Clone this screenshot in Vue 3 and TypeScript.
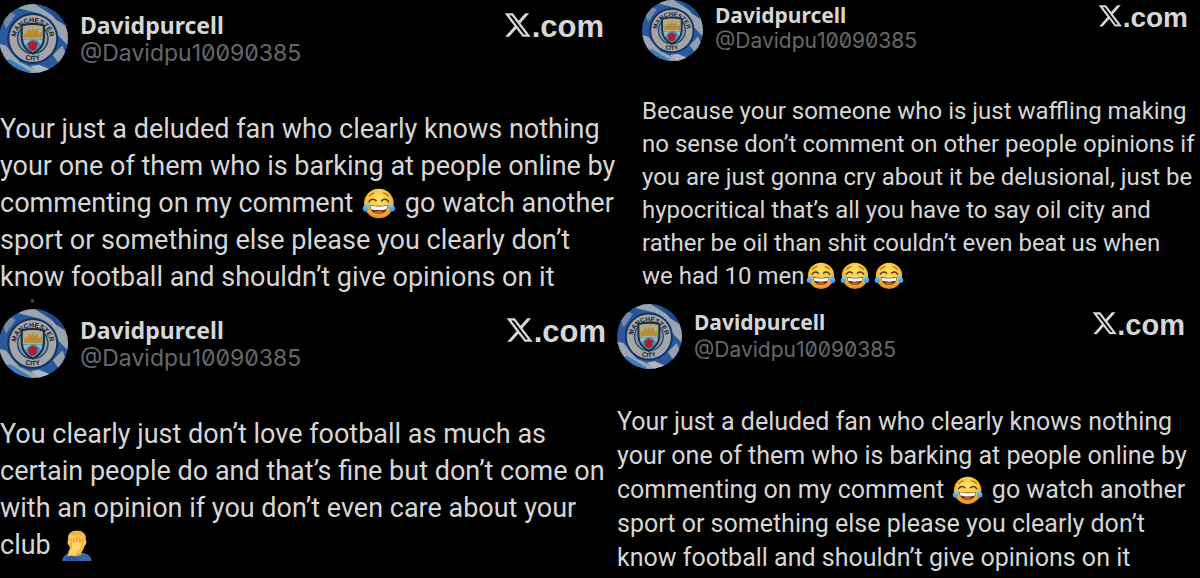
<script setup lang="ts">
interface Post {
  id: string
  lines: string[]
}

const name = 'Davidpurcell'
const handle = '@Davidpu10090385'

const deluded: string[] = [
  'Your just a deluded fan who clearly knows nothing',
  'your one of them who is barking at people online by',
  'commenting on my comment 😂 go watch another',
  'sport or something else please you clearly don’t',
  'know football and shouldn’t give opinions on it',
]

const columns: Post[][] = [
  [
    { id: 'first', lines: deluded },
    {
      id: 'third',
      lines: [
        'You clearly just don’t love football as much as',
        'certain people do and that’s fine but don’t come on',
        'with an opinion if you don’t even care about your',
        'club 🤦',
      ],
    },
  ],
  [
    {
      id: 'second',
      lines: [
        'Because your someone who is just waffling making',
        'no sense don’t comment on other people opinions if',
        'you are just gonna cry about it be delusional, just be',
        'hypocritical that’s all you have to say oil city and',
        'rather be oil than shit couldn’t even beat us when',
        'we had 10 men😂😂😂',
      ],
    },
    { id: 'fourth', lines: deluded },
  ],
]

const icons: Record<string, string> = { '😂': 'joy', '🤦': 'facepalm' }

function tokens(line: string): string[] {
  return line.split(/(😂|🤦)/u).filter((t) => t !== '')
}
</script>

<template>
  <svg class="defs" aria-hidden="true">
    <defs>
      <radialGradient id="face" cx="50%" cy="35%" r="65%">
        <stop offset="0" stop-color="#ffe36a" />
        <stop offset="0.6" stop-color="#fbc53c" />
        <stop offset="1" stop-color="#e58a1f" />
      </radialGradient>
      <linearGradient id="tear" x1="0" y1="0" x2="0" y2="1">
        <stop offset="0" stop-color="#8fd3f7" />
        <stop offset="1" stop-color="#2f93dd" />
      </linearGradient>
      <clipPath id="disc"><circle cx="50" cy="50" r="50" /></clipPath>
      <clipPath id="shield-clip"><path d="M33 31 Q49 27 65 31 V50 Q64 65 49 72 Q34 65 33 50Z" /></clipPath>
      <path id="arc-top" d="M24.500 51 A24.500 24.500 0 0 1 73.500 51" />
      <path id="arc-bottom" d="M17 50 A32 32 0 0 0 81 50" />
    </defs>
    <symbol id="joy" viewBox="0 0 36 32">
      <circle cx="18" cy="16" r="15.8" fill="url(#face)" />
      <path d="M8 8 Q10 5.500 13 5 M28 8 Q26 5.500 23 5" stroke="#a96a1c" stroke-width="1.4" fill="none" stroke-linecap="round" />
      <path d="M7.500 14 Q11 9.500 15 13 M21 13 Q25 9.500 28.500 14" stroke="#5b3514" stroke-width="1.7" fill="none" stroke-linecap="round" />
      <path d="M8 17.500 Q18 19.500 28 17.500 Q27 27 18 27 Q9 27 8 17.500Z" fill="#6b3412" />
      <path d="M8.800 18.200 Q18 20.200 27.200 18.200 L26.300 22 Q18 24 9.700 22Z" fill="#fff" />
      <path d="M13 25 Q18 22.800 23 25 Q18 28 13 25Z" fill="#d9603a" />
      <path d="M8 16 Q1 17 .8 21.500 Q1.200 25 4.300 24.500 Q7.600 23.500 8 16Z" fill="url(#tear)" />
      <path d="M28 16 Q35 17 35.200 21.500 Q34.800 25 31.700 24.500 Q28.400 23.500 28 16Z" fill="url(#tear)" />
    </symbol>
    <symbol id="facepalm" viewBox="0 0 34 34">
      <path d="M1 34 Q1 27 10 25 L24 25 Q33 27 33 34Z" fill="#3566a8" />
      <path d="M12 22 H22 V27 Q17 30 12 27Z" fill="#e8a52e" />
      <path d="M7.500 11 Q7 1 17 1 Q27 1 26.500 11 Q28 12 27.300 15 Q26.500 16.500 25.500 17 Q23.500 26 17 26 Q10 26 8.500 17 Q6.500 16 6.700 13Z" fill="#fbcb52" />
      <path d="M7 11 Q6 1 17 0.500 Q28 1 27 11 Q25 7 23 5 Q16 7 10 5.500 Q8 8 7 11Z" fill="#eeb244" />
      <path d="M7 28 Q8 22 11 18 L10.500 11 Q11 9 12.500 11 L14 14 L14 9 Q15 7 16 9 L17 13 L18 8 Q19.500 7 20 9 L20 14 L22 10 Q24 9 23.700 11 L22.500 18 Q21 23 17 26 L15 31 H7Z" fill="#ffd365" stroke="#cf8a2a" stroke-width="0.800" stroke-linejoin="round" />
      <path d="M5 30 Q11 26 18 30 V34 H5Z" fill="#2c5799" />
    </symbol>
    <symbol id="x-mark" viewBox="1 2 22 20">
      <path fill="currentColor" d="M18.244 2.250h3.308l-7.227 8.260 8.502 11.240H16.170l-5.214-6.817L4.990 21.750H1.680l7.730-8.835L1.254 2.250H8.080l4.713 6.231zm-1.161 17.520h1.833L7.084 4.126H5.117z" />
    </symbol>
  </svg>

  <main class="board">
    <div v-for="(column, c) in columns" :key="c" class="column">
      <article v-for="post in column" :key="post.id" class="post" :class="post.id">
        <header class="head">
          <svg class="avatar" viewBox="0 0 100 100" role="img" aria-label="Profile picture">
            <g clip-path="url(#disc)">
              <rect width="100" height="100" fill="#28599b" />
              <path d="M28 6 L46 -4 L58 4 L104 34 L106 66 L84 44 L60 14Z" fill="#99a4b0" />
              <path d="M-6 56 L10 60 L30 84 L74 104 H50 L18 86 L-6 76Z" fill="#9aa6b3" />
              <path d="M4 20 L16 10 L24 16 L10 36Z" fill="#7389a5" />
              <path d="M78 74 L92 60 L98 76 L88 88Z" fill="#919faf" />
              <path d="M46 90 L58 88 L82 98 L64 106Z" fill="#b0b6bd" />
              <path d="M2 84 L16 80 L46 98 L40 108Z" fill="#3b7cbd" />
              <path d="M66 2 L92 18 L100 34 L82 22Z" fill="#1c4a8c" />
            </g>
            <circle cx="49" cy="50" r="37" fill="#15305f" />
            <circle cx="49" cy="50" r="34" fill="#a3a5a6" />
            <circle cx="49" cy="50" r="23" fill="#1f3e6d" />
            <circle cx="49" cy="50" r="21" fill="#8799a6" />
            <text class="crest-text"><textPath href="#arc-top" startOffset="50%" text-anchor="middle">MANCHESTER</textPath></text>
            <text class="crest-text"><textPath href="#arc-bottom" startOffset="50%" text-anchor="middle">CITY</textPath></text>
            <g clip-path="url(#shield-clip)">
              <rect x="30" y="26" width="40" height="26" fill="#b1ab8e" />
              <rect x="30" y="51" width="40" height="26" fill="#4590bb" />
              <path d="M36 49 L37 41 L41 43 L43 35 L46 40 L49 34 L52 40 L56 35 L57 43 L62 40 L63 49Z" fill="#b98b2e" />
              <path d="M30 53 L46 51 L30 68Z M68 53 L54 51 L68 68Z" fill="#8cbac6" />
              <path d="M49 53 L56 57 L54 65 L49 68 L43 65 L42 57Z" fill="#a92030" />
            </g>
            <path d="M33 31 Q49 27 65 31 V50 Q64 65 49 72 Q34 65 33 50Z" fill="none" stroke="#1a2c40" stroke-width="3" />
          </svg>
          <div class="who">
            <strong class="name">{{ name }}</strong>
            <span class="handle">{{ handle }}</span>
          </div>
          <div class="brand"><svg class="mark" role="img" aria-label="X"><use href="#x-mark" /></svg><span>.com</span></div>
        </header>
        <p class="body">
          <span v-for="(line, i) in post.lines" :key="i" class="line"><template v-for="(t, k) in tokens(line)" :key="k"><svg v-if="icons[t]" class="emoji" role="img" :aria-label="icons[t]"><use :href="'#' + icons[t]" /></svg><template v-else>{{ t }}</template></template></span>
        </p>
      </article>
    </div>
  </main>
</template>

<style>
body {
  margin: 0;
  background: #000;
}
</style>

<style scoped>
.defs {
  position: absolute;
  width: 0;
  height: 0;
}
.board {
  display: grid;
  grid-template-columns: 617fr 583fr;
  min-height: 100vh;
  overflow: hidden;
  background: #000;
  color: #d6d6d6;
  font-family: Roboto, "Noto Sans", sans-serif;
}
.column {
  display: flex;
  flex-direction: column;
  min-width: 0;
}
.post {
  --avatar: 69px;
  --text: 27px;
  --line: 37px;
  --name: 23px;
  --name-line: 28px;
  --brand: 31px;
  --gap: 38px;
  --top: 7px;
  --brand-top: 5px;
}
.first {
  padding: 4px 13px 13px 0;
}
.third {
  position: relative;
  padding: 0 11px 0 0;
}
.third::before {
  content: "";
  position: absolute;
  top: -10px;
  left: 31px;
  width: 3px;
  height: 4px;
  border-radius: 1px;
  background: #3c3c3c;
}
.second {
  --avatar: 61px;
  --text: 24px;
  --line: 33px;
  --name: 21px;
  --name-line: 25px;
  --brand: 28px;
  --gap: 34px;
  --top: 3px;
  --brand-top: 0px;
  padding: 0 12px 11px 25px;
}
.fourth {
  --avatar: 65px;
  --text: 25px;
  --line: 34px;
  --name: 21px;
  --name-line: 27px;
  --brand: 29px;
  --gap: 36px;
  --top: 5px;
  --brand-top: 4px;
  padding: 0 15px 0 0;
}
.head {
  display: flex;
  align-items: flex-start;
}
.avatar {
  flex: none;
  width: var(--avatar);
  height: var(--avatar);
  margin-right: 12px;
}
.first .avatar,
.third .avatar {
  margin-left: -1px;
}
.crest-text {
  font: 700 10px "Liberation Sans", Arial, sans-serif;
  fill: #151d2c;
}
.who {
  display: flex;
  flex-direction: column;
  padding-top: var(--top);
  font-size: var(--name);
  line-height: var(--name-line);
}
.name {
  font-family: "Noto Sans", sans-serif;
  font-weight: 700;
}
.handle {
  color: #66696d;
  font-family: Inter, "Noto Sans", sans-serif;
  font-feature-settings: "zero";
}
.brand {
  display: flex;
  align-items: baseline;
  margin-left: auto;
  padding-top: var(--brand-top);
  font: 700 var(--brand) / 35px "Liberation Sans", Arial, sans-serif;
}
.mark {
  width: 0.88em;
  height: 0.78em;
}
.body {
  margin: var(--gap) 0 0;
  font-size: var(--text);
  line-height: var(--line);
}
.line {
  display: block;
  height: var(--line);
  white-space: nowrap;
}
.emoji {
  width: 1.25em;
  height: 1.15em;
  margin: 0 0.08em;
  vertical-align: -0.25em;
}
</style>
